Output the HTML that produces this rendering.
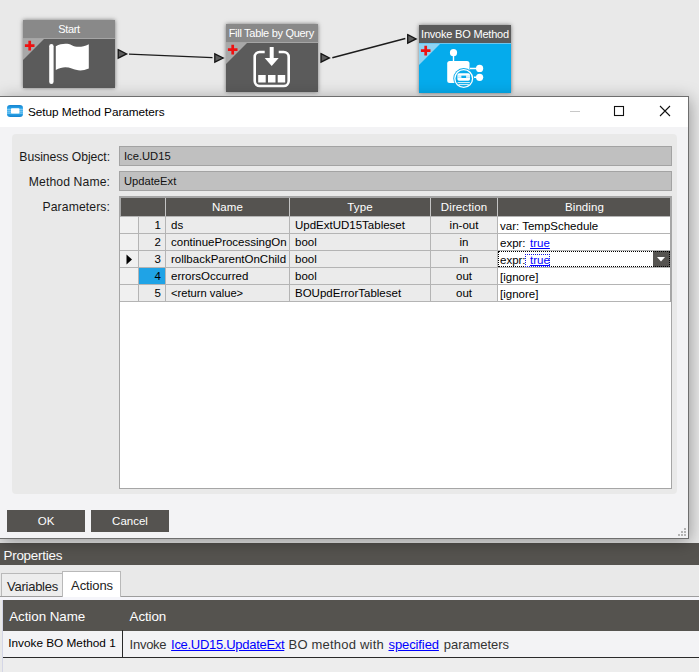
<!DOCTYPE html>
<html><head><meta charset="utf-8">
<style>
*{box-sizing:border-box;margin:0;padding:0}
html,body{width:699px;height:672px;overflow:hidden;background:#e9e9e9;font-family:"Liberation Sans",sans-serif;}
.abs{position:absolute}
.node{position:absolute;width:92px;height:68px;box-shadow:0 0 4px rgba(0,0,0,.5)}
.node .hd{position:absolute;left:0;top:0;width:100%;height:18px;background:#898989;color:#fff;font-size:11px;line-height:18px;text-align:center;white-space:nowrap;letter-spacing:-0.3px}
.node .bd{position:absolute;left:0;top:19px;width:100%;height:49px;background:#5b5b5b}
.node .sep{position:absolute;left:0;top:18px;width:100%;height:1px;background:#a5a5a5}
svg{position:absolute;overflow:visible}
#dlg{position:absolute;left:0;top:96px;width:689px;height:443px;background:#f3f3f5;border:1px solid #6e6e6e;border-left:none;box-shadow:1px 3px 16px rgba(0,0,0,.36)}
#ttl{position:absolute;left:0;top:0;width:688px;height:30px;background:#fff}
#ttl .t{position:absolute;left:28px;top:0;line-height:30px;font-size:11.8px;letter-spacing:-0.05px;color:#000;white-space:nowrap}
#panel{position:absolute;left:12px;top:37px;width:665px;height:360px;background:#e9e9e9;border-radius:4px}
.lbl{position:absolute;width:110px;text-align:right;font-size:12.2px;letter-spacing:-0.05px;color:#1a1a1a;white-space:nowrap;left:0}
.fld{position:absolute;left:119px;width:553px;height:20px;background:#c0c0c0;border:1px solid #a3a3a3;font-size:11.2px;line-height:18px;padding-left:4px;color:#111}
#grid{position:absolute;left:119px;top:99px;width:553px;height:293px;background:#fff;border:1px solid #a6a6a6}
.gh{position:absolute;height:18px;color:#fff;font-size:11.5px;line-height:19px;text-align:center;letter-spacing:0.1px}
.c{position:absolute;height:16px;font-size:11.5px;line-height:16px;letter-spacing:0;color:#000;white-space:nowrap;overflow:hidden;background:#ebebeb}
.btn{position:absolute;top:413px;height:22px;width:78px;background:#555350;color:#fff;font-size:11.5px;line-height:23px;text-align:center}
a{color:#0000ff;text-decoration:underline}
</style></head><body>

<!-- connectors -->
<svg class="abs" style="left:0;top:0" width="699" height="96">
 <line x1="129" y1="54.1" x2="212.5" y2="57.6" stroke="#1c1c1c" stroke-width="1.3"/>
 <line x1="332.3" y1="57.8" x2="405.3" y2="38.5" stroke="#1c1c1c" stroke-width="1.4"/>
 <polygon points="118.2,49.7 126.6,53.9 118.2,58.1" fill="#5e5e5e" stroke="#161616" stroke-width="1.3"/>
 <polygon points="214.8,53.8 223.2,58 214.8,62.2" fill="#5e5e5e" stroke="#161616" stroke-width="1.3"/>
 <polygon points="321,53.7 329.4,57.9 321,62.1" fill="#5e5e5e" stroke="#161616" stroke-width="1.3"/>
 <polygon points="407.7,34.7 416.1,38.9 407.7,43.1" fill="#5e5e5e" stroke="#161616" stroke-width="1.3"/>
</svg>

<!-- Start node -->
<div class="node" style="left:23px;top:20px">
 <div class="hd">Start</div><div class="sep"></div><div class="bd"></div>
 <svg style="left:0;top:19px" width="93" height="49">
  <polygon points="0,0 21,0 0,21" fill="#a8a8a8"/>
  <path d="M1.9,6.6 h9.6 M6.7,1.8 v9.6" stroke="#ee1111" stroke-width="2.7" fill="none"/>
  <rect x="26.2" y="5" width="4.4" height="40" rx="2.2" fill="#fff"/>
  <path d="M32.8,7.2 C38.8,4.2 44.8,4.2 48.8,6.2 S58.8,8.7 65.8,5.2 V29.5 C58.8,32.5 53.8,31.5 48.8,29.5 S38.8,27.5 32.8,31 Z" fill="#fff"/>
 </svg>
</div>

<!-- Fill Table node -->
<div class="node" style="left:226px;top:24px">
 <div class="hd" style="padding-right:1.4px">Fill Table by Query</div><div class="sep"></div><div class="bd"></div>
 <svg style="left:0;top:19px" width="93" height="49">
  <polygon points="0,0 21,0 0,21" fill="#a8a8a8"/>
  <path d="M1.9,6.6 h9.6 M6.7,1.8 v9.6" stroke="#ee1111" stroke-width="2.7" fill="none"/>
  <g transform="translate(-0.3,-1)"><path d="M39,10 H34 a5,5 0 0 0 -5,5 V39 a5,5 0 0 0 5,5 H58 a5,5 0 0 0 5,-5 V15 a5,5 0 0 0 -5,-5 H53" stroke="#fff" stroke-width="2.6" fill="none"/>
  <path d="M46,5 V18" stroke="#fff" stroke-width="4" fill="none"/>
  <polygon points="39,16 53,16 46,24" fill="#fff"/>
  <rect x="32.5" y="33" width="7.5" height="7.5" fill="#fff"/>
  <rect x="42.3" y="33" width="7.5" height="7.5" fill="#fff"/>
  <rect x="52" y="33" width="7.5" height="7.5" fill="#fff"/>
 </g>
 </svg>
</div>

<!-- Invoke BO node -->
<div class="node" style="left:419px;top:25px">
 <div class="hd" style="background:#5a5a5a;letter-spacing:-0.2px">Invoke BO Method</div><div class="sep" style="background:#6cc6ee"></div><div class="bd" style="background:#05abec"></div>
 <svg style="left:0;top:19px" width="93" height="49">
  <polygon points="0,0 21,0 0,21" fill="#8fd3f2"/>
  <path d="M1.9,6.6 h9.6 M6.7,1.8 v9.6" stroke="#ee1111" stroke-width="2.7" fill="none"/>
  <circle cx="34.5" cy="8.7" r="3.6" fill="#fff"/>
  <path d="M34.5,10 V18" stroke="#fff" stroke-width="1.4"/>
  <rect x="28.2" y="17" width="22.3" height="22" rx="2.5" fill="#fff"/>
  <path d="M51,24.4 H60 M51,33.3 H60" stroke="#fff" stroke-width="1.5"/>
  <circle cx="60.6" cy="24.4" r="3.6" fill="#fff"/>
  <circle cx="60.6" cy="33.3" r="3.6" fill="#fff"/>
  <circle cx="44.7" cy="34.5" r="10.4" fill="#05abec"/>
  <circle cx="44.7" cy="34.5" r="8.9" fill="#05abec" stroke="#fff" stroke-width="1.3"/>
  <rect x="38.4" y="29.3" width="12.6" height="7.4" rx="1.6" fill="#fff"/>
  <rect x="42.3" y="31.6" width="4.8" height="2.4" fill="#05abec"/>
  <path d="M38.4,32 H42.3 M47.1,32 H51 M38.4,33.6 H42.3 M47.1,33.6 H51" stroke="#7fd0f3" stroke-width="0.6"/>
  <path d="M38.6,38.6 H50.8 M39.6,40.6 H49.8" stroke="#fff" stroke-width="0.9"/>
 </svg>
</div>

<!-- Properties panel behind -->
<div class="abs" style="left:0;top:539px;width:699px;height:133px;background:#e9e9e9"></div>
<div class="abs" style="left:0;top:543px;width:699px;height:22px;background:#55534f;color:#fff;font-size:13.4px;line-height:25.6px;padding-left:3.5px;letter-spacing:-0.24px;white-space:nowrap">Properties</div>
<div class="abs" style="left:0;top:596px;width:699px;height:1px;background:#9d9d9d"></div>
<div class="abs" style="left:0;top:597px;width:699px;height:3px;background:#f5f5fa"></div>
<div class="abs" style="left:1px;top:573px;width:62px;height:23px;padding-left:1px;border:1px solid #b9b9b9;border-bottom:none;background:#ededed;font-size:13px;line-height:25px;text-align:center;color:#222;letter-spacing:-0.25px;white-space:nowrap">Variables</div>
<div class="abs" style="left:62px;top:571px;width:59px;height:26px;padding-left:1px;border:1px solid #b9b9b9;border-bottom:none;background:#fff;font-size:13px;line-height:28px;text-align:center;color:#222;letter-spacing:-0.12px;white-space:nowrap">Actions</div>
<div class="abs" style="left:2px;top:600px;width:1px;height:72px;background:#d4d6e6"></div>
<div class="abs" style="left:3px;top:600px;width:696px;height:31px;background:#55534f;color:#fff;font-size:13.4px;line-height:34px;white-space:nowrap">
 <span class="abs" style="left:6.2px;letter-spacing:-0.06px">Action Name</span><span class="abs" style="left:126.6px;letter-spacing:-0.13px">Action</span></div>
<div class="abs" style="left:3px;top:631px;width:696px;height:26px;background:#f3f3f5"></div>
<div class="abs" style="left:3px;top:657px;width:696px;height:1px;background:#2a2a2a"></div>
<div class="abs" style="left:122px;top:630px;width:1px;height:27px;background:#2a2a2a"></div>
<div class="abs" style="left:8.2px;top:630px;font-size:11.8px;line-height:26px;color:#000;white-space:nowrap">Invoke BO Method 1</div>
<div class="abs" style="left:0;top:632px;width:699px;height:24px;font-size:13px;line-height:26px;color:#333;white-space:nowrap">
<span class="abs" style="left:129.6px;letter-spacing:-0.262px">Invoke</span>
<a class="abs" style="left:171.1px;letter-spacing:-0.295px">Ice.UD15.UpdateExt</a>
<span class="abs" style="left:288.6px;letter-spacing:0.200px">BO method with</span>
<a class="abs" style="left:388.5px;letter-spacing:-0.101px">specified</a>
<span class="abs" style="left:443.8px;letter-spacing:-0.061px">parameters</span>
</div>
<div class="abs" style="left:3px;top:658px;width:696px;height:14px;background:#ededed"></div>

<!-- Dialog -->
<div id="dlg">
 <div id="ttl"><div class="t">Setup Method Parameters</div>
  <svg style="left:7px;top:8px" width="16" height="12">
   <defs><linearGradient id="ig" x1="0" y1="0" x2="0" y2="1"><stop offset="0" stop-color="#1583cf"/><stop offset="0.3" stop-color="#2aa6ea"/><stop offset="0.7" stop-color="#2aa6ea"/><stop offset="1" stop-color="#1583cf"/></linearGradient></defs>
   <rect x="0" y="0" width="16" height="12" rx="3.2" fill="url(#ig)"/>
   <path d="M0,4.3 H16 M0,6.2 H16 M0,8.1 H16" stroke="#a9dcf7" stroke-width="0.8"/>
   <rect x="4" y="3.2" width="8.4" height="5.4" rx="0.8" fill="#fff"/>
  </svg>
  <svg style="left:568px;top:-1px" width="120" height="30">
   <path d="M2,15.5 H12" stroke="#c8c8c8" stroke-width="1"/>
   <rect x="46.5" y="10.5" width="9" height="9" fill="none" stroke="#111" stroke-width="1.1"/>
   <path d="M92,10 L102,20 M102,10 L92,20" stroke="#111" stroke-width="1.1"/>
  </svg>
 </div>
 <div id="panel"></div>
 <div class="lbl" style="top:53px">Business Object:</div>
 <div class="fld" style="top:49px">Ice.UD15</div>
 <div class="lbl" style="top:78px;letter-spacing:0.1px">Method Name:</div>
 <div class="fld" style="top:74px">UpdateExt</div>
 <div class="lbl" style="top:103px;letter-spacing:0.1px">Parameters:</div>
 <div id="grid">
<div class="abs" style="left:0;top:0;width:1px;height:19px;background:#a6a6a6"></div><div class="abs" style="left:0;top:0;width:551px;height:1px;background:#a6a6a6"></div><div class="abs" style="left:550px;top:0;width:1px;height:105px;background:#a6a6a6;z-index:5"></div>
<div class="abs" style="left:1px;top:1px;width:550px;height:18px;background:#555350"></div>
<div class="abs" style="left:45px;top:1px;width:1px;height:18px;background:#c4c4c4"></div>
<div class="abs" style="left:169px;top:1px;width:1px;height:18px;background:#c4c4c4"></div>
<div class="abs" style="left:310px;top:1px;width:1px;height:18px;background:#c4c4c4"></div>
<div class="abs" style="left:377px;top:1px;width:1px;height:18px;background:#c4c4c4"></div>
<div class="gh" style="left:46px;top:1px;width:123px">Name</div>
<div class="gh" style="left:170px;top:1px;width:140px">Type</div>
<div class="gh" style="left:311px;top:1px;width:66px">Direction</div>
<div class="gh" style="left:378px;top:1px;width:173px">Binding</div>
<div class="abs" style="left:0px;top:19px;width:551px;height:86px;background:#b4b4b4"></div>
<div class="c" style="left:0px;top:20px;width:18px;background:#f0f0f0"></div>
<div class="c" style="left:19px;top:20px;width:26px;text-align:right;padding-right:4px">1</div>
<div class="c" style="left:46px;top:20px;width:123px;padding-left:5px">ds</div>
<div class="c" style="left:170px;top:20px;width:140px;padding-left:5px">UpdExtUD15Tableset</div>
<div class="c" style="left:311px;top:20px;width:66px;text-align:center">in-out</div>
<div class="c" style="left:378px;top:20px;width:173px;padding-left:2px;background:#fff;line-height:18px">var: TempSchedule</div>
<div class="c" style="left:0px;top:37px;width:18px;background:#f0f0f0"></div>
<div class="c" style="left:19px;top:37px;width:26px;text-align:right;padding-right:4px">2</div>
<div class="c" style="left:46px;top:37px;width:123px;padding-left:5px">continueProcessingOn</div>
<div class="c" style="left:170px;top:37px;width:140px;padding-left:5px">bool</div>
<div class="c" style="left:311px;top:37px;width:66px;text-align:center">in</div>
<div class="c" style="left:378px;top:37px;width:173px;padding-left:2px;background:#fff;line-height:18px">expr: <a style="margin-left:1.3px">true</a></div>
<div class="c" style="left:0px;top:54px;width:18px;background:#f0f0f0"></div>
<div class="c" style="left:19px;top:54px;width:26px;text-align:right;padding-right:4px">3</div>
<div class="c" style="left:46px;top:54px;width:123px;padding-left:5px">rollbackParentOnChild</div>
<div class="c" style="left:170px;top:54px;width:140px;padding-left:5px">bool</div>
<div class="c" style="left:311px;top:54px;width:66px;text-align:center">in</div>
<div class="c" style="left:378px;top:54px;width:173px;padding-left:2px;background:#fff;line-height:18px">expr: <a style="margin-left:1.3px">true</a></div>
<div class="c" style="left:0px;top:71px;width:18px;background:#f0f0f0"></div>
<div class="c" style="left:19px;top:71px;width:26px;text-align:right;padding-right:4px;background:#1fa3e6">4</div>
<div class="c" style="left:46px;top:71px;width:123px;padding-left:5px">errorsOccurred</div>
<div class="c" style="left:170px;top:71px;width:140px;padding-left:5px">bool</div>
<div class="c" style="left:311px;top:71px;width:66px;text-align:center">out</div>
<div class="c" style="left:378px;top:71px;width:173px;padding-left:2px;background:#fff;line-height:18px">[ignore]</div>
<div class="c" style="left:0px;top:88px;width:18px;background:#f0f0f0"></div>
<div class="c" style="left:19px;top:88px;width:26px;text-align:right;padding-right:4px">5</div>
<div class="c" style="left:46px;top:88px;width:123px;padding-left:5px;font-size:11.2px">&lt;return value&gt;</div>
<div class="c" style="left:170px;top:88px;width:140px;padding-left:5px">BOUpdErrorTableset</div>
<div class="c" style="left:311px;top:88px;width:66px;text-align:center">out</div>
<div class="c" style="left:378px;top:88px;width:173px;padding-left:2px;background:#fff;line-height:18px">[ignore]</div>
<svg style="left:6px;top:57px" width="8" height="11"><polygon points="0.5,0.5 6,5.5 0.5,10.5" fill="#000"/></svg>
<div class="abs" style="left:533px;top:54px;width:17px;height:16px;background:#555350"></div>
<svg style="left:533px;top:54px" width="16" height="16"><polygon points="4,6 12,6 8,10.5" fill="#fff"/></svg>
<div class="abs" style="left:378px;top:54px;width:172px;height:16px;border:1px dotted #000"></div>
<div class="abs" style="left:405px;top:57px;width:25px;height:13px;border:1px dotted #1a1ae6"></div>
</div>
 <div class="btn" style="left:7px">OK</div>
 <div class="btn" style="left:91px">Cancel</div>
 <svg style="left:677px;top:430px" width="10" height="10"><path d="M7,1h2v2h-2z M4,4h2v2h-2z M7,4h2v2h-2z M1,7h2v2h-2z M4,7h2v2h-2z M7,7h2v2h-2z" fill="#b4b4b4"/></svg>
</div>
</body></html>
